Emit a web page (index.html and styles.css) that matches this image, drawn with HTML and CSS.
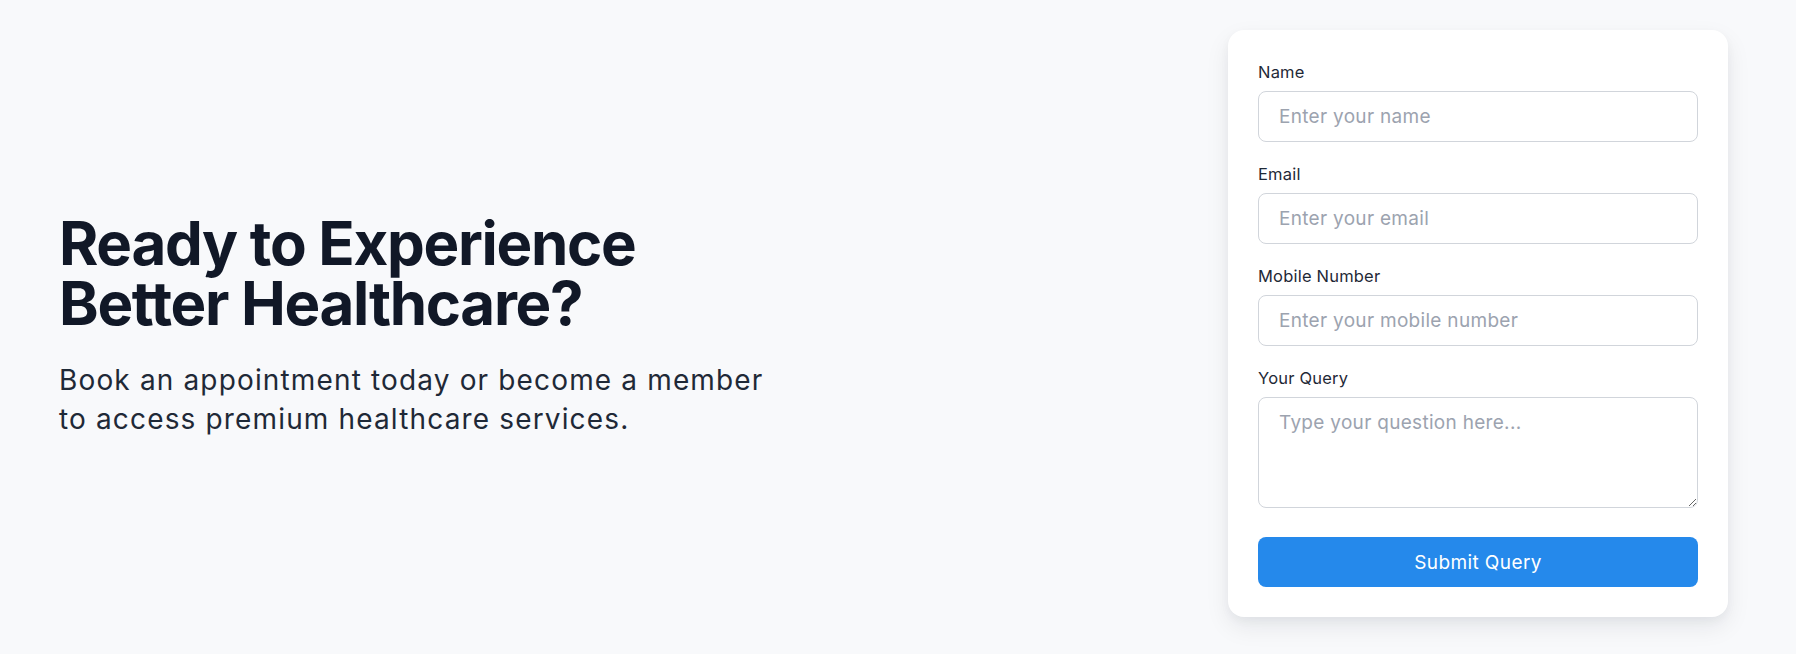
FILE: index.html
```html
<!DOCTYPE html>
<html lang="en">
<head>
<meta charset="utf-8">
<title>Ready to Experience Better Healthcare?</title>
<link rel="stylesheet" href="styles.css">
</head>
<body>
<main class="page">
  <section class="intro">
    <h1 class="title">Ready to Experience<br>Better Healthcare?</h1>
    <p class="lead">Book an appointment today or become a member<br>to access premium healthcare services.</p>
  </section>
  <form class="card">
    <div class="field">
      <label class="label" for="name">Name</label>
      <input class="control" id="name" type="text" placeholder="Enter your name">
    </div>
    <div class="field">
      <label class="label" for="email">Email</label>
      <input class="control" id="email" type="email" placeholder="Enter your email">
    </div>
    <div class="field">
      <label class="label" for="mobile">Mobile Number</label>
      <input class="control" id="mobile" type="tel" placeholder="Enter your mobile number">
    </div>
    <div class="field">
      <label class="label" for="query">Your Query</label>
      <textarea class="control area" id="query" placeholder="Type your question here..."></textarea>
    </div>
    <button class="submit" type="button">Submit Query</button>
  </form>
</main>
</body>
</html>
```

FILE: styles.css
```css
* { box-sizing: border-box; }
html, body { margin: 0; padding: 0; }
body {
  background: #f8f9fb;
  font-family: Inter, "Noto Sans", sans-serif;
  color: #111827;
  width: 1796px;
  height: 654px;
  overflow: hidden;
}
.page {
  display: flex;
  justify-content: space-between;
  align-items: center;
  padding: 30px 68px 38px 59px;
}
.intro { padding-top: 4px; }
.title {
  margin: 0;
  font-size: 60px;
  line-height: 60px;
  font-weight: 700;
  color: #111827;
  letter-spacing: -1.3px;
}
.lead {
  margin: 28px 0 0;
  font-size: 28px;
  line-height: 39px;
  color: #1f2937;
  font-weight: 400;
  letter-spacing: 1.15px;
}
.card {
  width: 500px;
  background: #fff;
  border-radius: 16px;
  padding: 30px;
  box-shadow: 0 10px 25px rgba(17, 24, 39, 0.08), 0 4px 10px rgba(17, 24, 39, 0.04);
  display: flex;
  flex-direction: column;
}
.field { display: flex; flex-direction: column; margin-bottom: 20px; }
.label {
  font-size: 16.5px;
  line-height: 25px;
  color: #1f2937;
  font-weight: 400;
  letter-spacing: 0.2px;
  margin-bottom: 6px;
}
.control {
  width: 100%;
  height: 51px;
  border: 1px solid #d1d5db;
  border-radius: 8px;
  padding: 0 20px;
  font-family: inherit;
  font-size: 19px;
  letter-spacing: 0.3px;
  color: #111827;
  background: #fff;
  outline: none;
}
.control::placeholder { color: #9ca3af; }
.area {
  height: 111px;
  padding: 11px 20px;
  resize: vertical;
  line-height: 28px;
}
.submit {
  margin-top: 9px;
  height: 50px;
  width: 100%;
  border: 0;
  border-radius: 8px;
  background: #2589eb;
  color: #fff;
  font-family: inherit;
  font-size: 19px;
  letter-spacing: 0.4px;
  cursor: pointer;
}
```
